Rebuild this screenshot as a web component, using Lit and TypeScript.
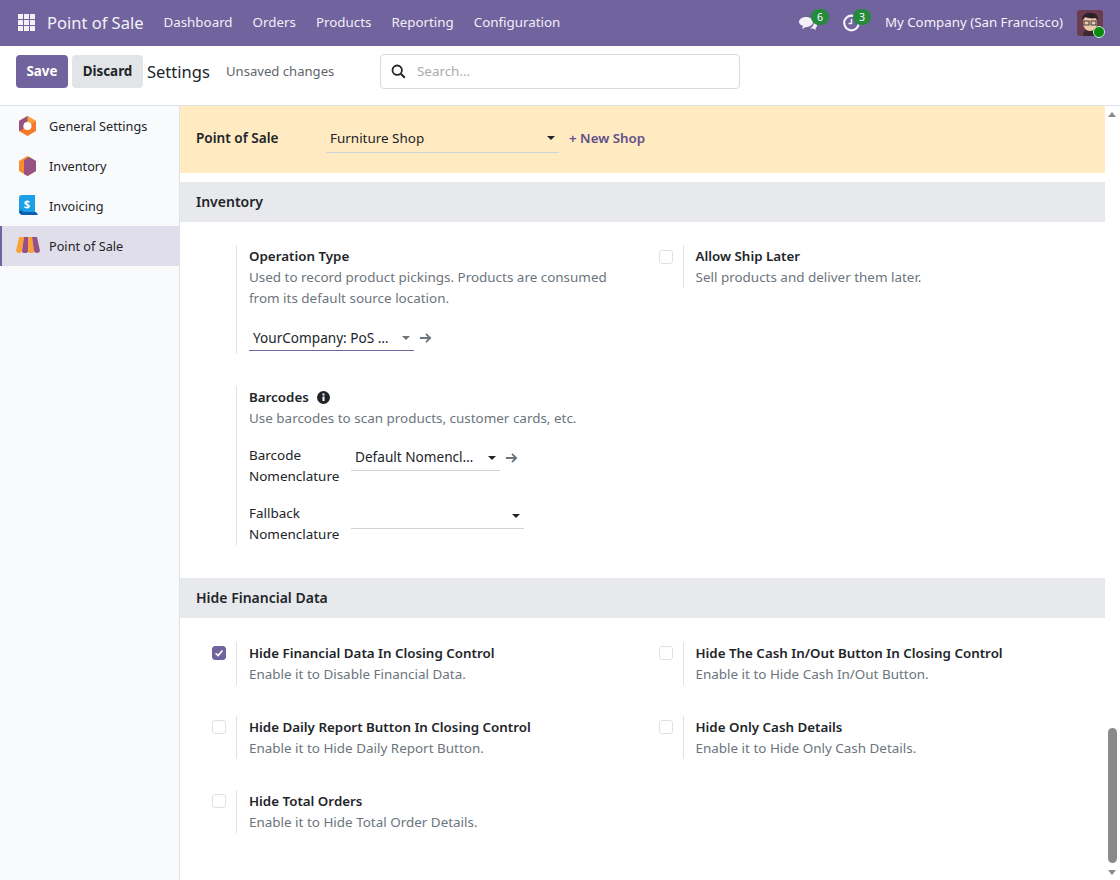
import { LitElement, html, css, svg } from "lit";
import { customElement } from "lit/decorators.js";

const caret = html`<span class="caret"></span>`;
const arrow = html`<svg class="arrow" viewBox="0 0 14 12" width="13" height="12"><path d="M1 6h11M7.500 1.500 12 6l-4.500 4.500" fill="none" stroke="#6c757d" stroke-width="2"/></svg>`;

const icons: Record<string, unknown> = {
  general: svg`<polygon points="11.500,2 20,7 20,17 11.500,22 3,17 3,7" fill="#f47b2a"/><polygon points="11.500,2 20,7 16,9 7,7" fill="#f9a13a"/><polygon points="3,7 11.500,2 11.500,7 7,12 7,15 3,17" fill="#985184"/><circle cx="11.500" cy="12" r="4" fill="#fff"/>`,
  inventory: svg`<polygon points="11.500,2 20,7 20,17 11.500,22 3,17 3,7" fill="#f98e2c"/><polygon points="13,3 20,7 20,17 11.500,22 8,20 8,6" fill="#985184"/>`,
  invoicing: svg`<path d="M3 4q0-3 3-3h13v18H3z" fill="#1a9fe8"/><path d="M3 17q0 4 4 4h15l-2-3H8q-2 0-2-2z" fill="#0a5fb0"/><text x="11" y="14" font-size="11" font-weight="700" fill="#fff" text-anchor="middle" font-family="Noto Sans">$</text>`,
  pos: svg`<path d="M3 3h5l-2 14q-.5 2-3 2t-3-2z" fill="#f9a13a"/><path d="M8 3h4v14q0 2-3 2t-3-2z" fill="#985184"/><path d="M12 3h4l2 14q0 2-3 2t-3-2z" fill="#f9a13a"/><path d="M16 3h5l3 14q-.5 2-3 2t-3-2z" fill="#985184"/>`,
};

@customElement("app-root")
export class AppRoot extends LitElement {
  static styles = css`
    :host {
      display: block;
      width: 1120px;
      height: 880px;
      overflow: hidden;
      font-family: "Noto Sans", "Open Sans", sans-serif;
      font-size: 13.450px;
      line-height: 21px;
      color: #212529;
      background: #fff;
    }
    * { box-sizing: border-box; }

    .navbar {
      height: 46px;
      background: #71639e;
      color: #fff;
      display: flex;
      align-items: center;
      padding: 0 0 1px 18px;
    }
    .apps { display: block; margin-right: 12px; }
    .brand { font-size: 16.500px; margin-right: 20px; opacity: 0.92; }
    .menu { display: flex; gap: 20px; opacity: 0.9; font-size: 13.350px; }
    .systray { margin-left: auto; display: flex; align-items: center; padding-right: 17px; }
    .tray-icon { width: 20px; height: 20px; display: block; }
    .tray-item { position: relative; display: block; height: 20px; }
    .tray-chat { width: 45px; }
    .tray-clock { width: 20px; }
    .badge {
      position: absolute;
      top: -4px;
      background: #268a3d;
      color: #fff;
      font-size: 10.500px;
      line-height: 16px;
      height: 16px;
      width: 18px;
      text-align: center;
      border-radius: 8px;
    }
    .tray-chat .badge { left: 13px; }
    .tray-clock .badge { left: 10px; }
    .company { margin-left: 22px; font-size: 13.300px; opacity: 0.92; margin-right: 14px; }
    .avatar { position: relative; width: 26px; height: 26px; display: block; margin-top: 1px; }
    .avatar svg { display: block; }
    .online {
      position: absolute;
      right: -2px;
      bottom: -2px;
      width: 12px;
      height: 12px;
      border-radius: 50%;
      background: #0a8a0a;
      border: 1px solid #cfe8e0;
    }

    .control {
      height: 60px;
      display: flex;
      align-items: flex-start;
      padding: 9px 0 0 16px;
      border-bottom: 1px solid #dee2e6;
    }
    .btn {
      height: 33px;
      border-radius: 4px;
      font-weight: 700;
      font-size: 13.400px;
      line-height: 33px;
      text-align: center;
    }
    .save { width: 52px; background: #71639e; color: #fff; margin-right: 4px; }
    .discard { width: 71px; background: #e2e5e8; margin-right: 4px; }
    .title { font-size: 16.500px; line-height: 34px; width: 79px; }
    .unsaved { color: #5f666d; font-size: 13.100px; line-height: 32px; width: 154px; }
    .search {
      width: 360px;
      height: 35px;
      margin-top: -1px;
      border: 1px solid #d8dadd;
      border-radius: 4px;
      display: flex;
      align-items: center;
      padding-left: 10px;
      gap: 11px;
      color: #a7acb1;
      font-size: 13.400px;
    }

    .body { display: flex; height: 774px; }
    .sidebar { width: 180px; background: #f9fafb; border-right: 1px solid #dee2e6; flex: none; }
    .tab { height: 40px; display: flex; align-items: center; padding-left: 16px; font-size: 12.700px; gap: 9px; }
    .tab.active { background: #e0deea; border-left: 2px solid #71639e; padding-left: 14px; }
    .tab svg { width: 24px; height: 24px; flex: none; }

    .content { flex: 1; min-width: 0; }
    .banner {
      height: 67px;
      background: #ffeac2;
      display: flex;
      align-items: center;
      padding: 0 0 2px 16px;
      margin-bottom: 9px;
    }
    .banner b { width: 130px; font-weight: 600; font-size: 13.600px; line-height: 19px; padding-bottom: 2px; }
    .shop { width: 233px; height: 28px; border-bottom: 1px solid #ced4da; padding-left: 4px; position: relative; line-height: 26px; }
    .new-shop { color: #5e5187; font-weight: 600; margin-left: 10px; font-size: 13.350px; }

    .caret {
      position: absolute;
      right: 4px;
      top: 50%;
      margin-top: -2px;
      border-top: 4px solid #212529;
      border-left: 4px solid transparent;
      border-right: 4px solid transparent;
    }
    .section {
      height: 40px;
      background: #e8e9ed;
      padding-left: 16px;
      font-weight: 600;
      font-size: 14px;
      line-height: 40px;
    }
    .grid { display: grid; grid-template-columns: 446.500px 1fr; }
    .grid.top { padding-top: 23px; height: 356px; }
    .grid.top .check { padding-top: 5px; }
    .grid.bottom { padding-top: 24px; row-gap: 31px; }
    .setting { display: flex; align-items: flex-start; }
    .check { width: 56px; flex: none; padding: 4px 0 0 32px; }
    .box {
      width: 14px;
      height: 14px;
      border: 1px solid #dee2e6;
      border-radius: 3px;
      display: block;
      background: #fff;
    }
    .box.on { background: #71639e; border-color: #71639e; }
    .box svg { display: block; }
    .pane { border-left: 1px solid #dee2e6; padding: 1px 0 0 12px; min-height: 40px; }
    .pane.op { padding-bottom: 3px; }
    .name { font-weight: 600; display: flex; align-items: center; gap: 8px; font-size: 13.350px; }
    .hint { color: #6c757d; }
    .left-stack { display: flex; flex-direction: column; gap: 32px; }
    .field { margin-top: 16px; display: flex; align-items: center; gap: 5px; }
    .select { height: 26px; border-bottom: 1px solid #71639e; position: relative; padding-left: 4px; line-height: 25px; font-size: 13.600px; }
    .select .caret { border-top-color: #6c757d; }
    .sel-op { width: 165px; }
    .sel-barcode { width: 149px; }
    .sel-fallback { width: 173px; }
    .row { display: flex; align-items: flex-start; margin-top: 16px; }
    .row .label { width: 102px; flex: none; }
    .row .select { border-bottom-color: #ced4da; line-height: 24px; }
    .row .select .caret { border-top-color: #212529; }
    .row .arrow { margin: 7px 0 0 5px; }

    .scroll { width: 15px; flex: none; position: relative; background: #fff; }
    .scroll .up, .scroll .down {
      position: absolute;
      left: 3px;
      border-left: 4.500px solid transparent;
      border-right: 4.500px solid transparent;
    }
    .scroll .up { top: 6px; border-bottom: 5px solid #8a8a8a; }
    .scroll .down { bottom: 5px; border-top: 5px solid #8a8a8a; }
    .thumb {
      position: absolute;
      left: 3px;
      top: 622px;
      width: 9px;
      height: 135px;
      background: #8a8a8a;
      border-radius: 5px;
    }
  `;

  private tab(icon: string, label: string, active = false) {
    return html`<div class="tab ${active ? "active" : ""}">
      <svg viewBox="0 0 24 24">${icons[icon]}</svg>${label}
    </div>`;
  }

  private setting(name: string, hint: string, on = false) {
    return html`<div class="setting">
      <div class="check">
        <span class="box ${on ? "on" : ""}">
          ${on ? html`<svg viewBox="0 0 14 14" width="12" height="12"><path d="M3 7.500 6 10l5-6" fill="none" stroke="#fff" stroke-width="2"/></svg>` : ""}
        </span>
      </div>
      <div class="pane">
        <div class="name">${name}</div>
        <div class="hint">${hint}</div>
      </div>
    </div>`;
  }

  render() {
    return html`
      <div class="navbar">
        <svg class="apps" width="17" height="17" viewBox="0 0 17 17" fill="#f3f1f7">
          ${[0, 6, 12].map((y) => [0, 6, 12].map((x) => svg`<rect x=${x} y=${y} width="5" height="5"/>`))}
        </svg>
        <span class="brand">Point of Sale</span>
        <div class="menu">
          <span>Dashboard</span><span>Orders</span><span>Products</span><span>Reporting</span><span>Configuration</span>
        </div>
        <div class="systray">
          <span class="tray-item tray-chat">
            <svg class="tray-icon" viewBox="0 0 20 20"><path d="M8 4c4 0 7 2.200 7 5s-3 5-7 5l-4 2 1-3C3 12 1 11 1 9c0-2.800 3-5 7-5z" fill="#f3f1f7"/><path d="M16 9c2 1 3 2 3 3.500 0 1-.6 2-1.500 2.500l.5 2-3-1.500h-3c2-1 4-3 4-6.500z" fill="#f3f1f7"/></svg>
            <span class="badge">6</span>
          </span>
          <span class="tray-item tray-clock">
            <svg class="tray-icon" viewBox="0 0 20 20"><circle cx="8.500" cy="10" r="7.300" fill="none" stroke="#f3f1f7" stroke-width="2.200"/><path d="M8.500 6v4.500H5.500" fill="none" stroke="#f3f1f7" stroke-width="1.500"/></svg>
            <span class="badge">3</span>
          </span>
          <span class="company">My Company (San Francisco)</span>
          <span class="avatar">
            <svg width="26" height="26" viewBox="0 0 26 26">
              <rect width="26" height="26" rx="3" fill="#6b3b4e"/>
              <path d="M6 26c0-5 3-7 7-7s7 2 7 7z" fill="#3a2a30"/>
              <ellipse cx="13" cy="13" rx="7" ry="8" fill="#f0c9a8"/>
              <path d="M5 10c0-6 5-8 10-7 4 0 6 3 6 7l-2-2c-4 1-9 0-11-1z" fill="#2a2226"/>
              <rect x="7" y="11" width="5" height="4" fill="none" stroke="#3a3a3a"/>
              <rect x="14" y="11" width="5" height="4" fill="none" stroke="#3a3a3a"/>
            </svg>
            <span class="online"></span>
          </span>
        </div>
      </div>

      <div class="control">
        <div class="btn save">Save</div>
        <div class="btn discard">Discard</div>
        <div class="title">Settings</div>
        <div class="unsaved">Unsaved changes</div>
        <div class="search">
          <svg width="15" height="15" viewBox="0 0 15 15"><circle cx="6.200" cy="6.200" r="4.700" fill="none" stroke="#212529" stroke-width="1.800"/><path d="m9.800 9.800 4 4" stroke="#212529" stroke-width="2"/></svg>
          Search...
        </div>
      </div>

      <div class="body">
        <div class="sidebar">
          ${this.tab("general", "General Settings")}
          ${this.tab("inventory", "Inventory")}
          ${this.tab("invoicing", "Invoicing")}
          ${this.tab("pos", "Point of Sale", true)}
        </div>

        <div class="content">
          <div class="banner">
            <b>Point of Sale</b>
            <div class="shop">Furniture Shop${caret}</div>
            <span class="new-shop">+ New Shop</span>
          </div>

          <div class="section">Inventory</div>
          <div class="grid top">
            <div class="left-stack">
              <div class="setting">
                <div class="check"></div>
                <div class="pane op">
                  <div class="name">Operation Type</div>
                  <div class="hint">Used to record product pickings. Products are consumed<br />from its default source location.</div>
                  <div class="field">
                    <div class="select sel-op">YourCompany: PoS …${caret}</div>
                    ${arrow}
                  </div>
                </div>
              </div>
              <div class="setting">
                <div class="check"></div>
                <div class="pane">
                  <div class="name">
                    Barcodes
                    <svg width="13" height="13" viewBox="0 0 13 13"><circle cx="6.500" cy="6.500" r="6.500" fill="#212529"/><rect x="5.500" y="5.500" width="2" height="4.500" fill="#fff"/><rect x="5.500" y="2.500" width="2" height="2" fill="#fff"/></svg>
                  </div>
                  <div class="hint">Use barcodes to scan products, customer cards, etc.</div>
                  <div class="row">
                    <div class="label">Barcode<br />Nomenclature</div>
                    <div class="select sel-barcode">Default Nomencl…${caret}</div>
                    ${arrow}
                  </div>
                  <div class="row">
                    <div class="label">Fallback<br />Nomenclature</div>
                    <div class="select sel-fallback">${caret}</div>
                  </div>
                </div>
              </div>
            </div>
            ${this.setting("Allow Ship Later", "Sell products and deliver them later.")}
          </div>

          <div class="section">Hide Financial Data</div>
          <div class="grid bottom">
            ${this.setting("Hide Financial Data In Closing Control", "Enable it to Disable Financial Data.", true)}
            ${this.setting("Hide The Cash In/Out Button In Closing Control", "Enable it to Hide Cash In/Out Button.")}
            ${this.setting("Hide Daily Report Button In Closing Control", "Enable it to Hide Daily Report Button.")}
            ${this.setting("Hide Only Cash Details", "Enable it to Hide Only Cash Details.")}
            ${this.setting("Hide Total Orders", "Enable it to Hide Total Order Details.")}
          </div>
        </div>

        <div class="scroll">
          <span class="up"></span>
          <span class="thumb"></span>
          <span class="down"></span>
        </div>
      </div>
    `;
  }
}
